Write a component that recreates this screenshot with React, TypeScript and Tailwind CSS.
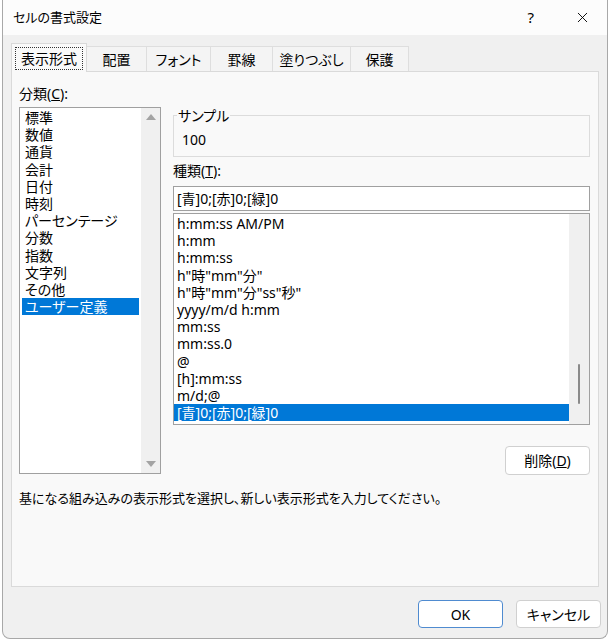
import { X } from 'lucide-react';

const categories = [
  '標準',
  '数値',
  '通貨',
  '会計',
  '日付',
  '時刻',
  'パーセンテージ',
  '分数',
  '指数',
  '文字列',
  'その他',
  'ユーザー定義',
];

const formats = [
  'h:mm:ss AM/PM',
  'h:mm',
  'h:mm:ss',
  'h"時"mm"分"',
  'h"時"mm"分"ss"秒"',
  'yyyy/m/d h:mm',
  'mm:ss',
  'mm:ss.0',
  '@',
  '[h]:mm:ss',
  'm/d;@',
  '[青]0;[赤]0;[緑]0',
];

const tabs = [
  { label: '配置', w: 'w-[60px]' },
  { label: 'フォント', w: 'w-[64px]' },
  { label: '罫線', w: 'w-[62px]' },
  { label: '塗りつぶし', w: 'w-[78px]' },
  { label: '保護', w: 'w-[58px]' },
];

export default function App() {
  return (
    <div className="w-[610px] h-[641px] bg-white font-['Noto_Sans','Noto_Sans_CJK_JP',sans-serif] [font-feature-settings:'palt'] text-[14px] text-black">
      <div className="ml-[2px] w-[606px] h-[639px] border-x border-b border-[#a8a8a8] rounded-b-[8px] bg-[#f0f0f0] flex flex-col overflow-hidden">
        {/* title bar */}
        <div className="h-[35px] bg-[#fcfcfc] flex items-center pl-[10px]">
          <span className="text-[13px]">セルの書式設定</span>
          <span className="ml-auto mr-[40px] text-[15px]">?</span>
          <X className="w-[17px] h-[17px] mr-[16px]" strokeWidth={1.3} />
        </div>

        {/* tabs */}
        <div className="flex items-end pl-[8px] mt-[8px] h-[28px] relative z-10">
          <div className="w-[76px] h-[29px] -mb-px px-[3px] pt-[3px] pb-[2px] bg-[#f9f9f9] border-x border-t border-[#d9d9d9] flex">
            <div className="flex-1 border border-dotted border-[#333] flex items-center justify-center leading-[20px]">
              表示形式
            </div>
          </div>
          {tabs.map((t) => (
            <div
              key={t.label}
              className={`${t.w} h-[25px] flex items-center justify-center bg-[#f4f4f4] border-t border-r border-[#dedede]`}
            >
              {t.label}
            </div>
          ))}
        </div>

        {/* panel */}
        <div className="mx-[8px] h-[516px] bg-[#f9f9f9] border border-[#dadada] flex flex-col pl-[7px] pr-[8px] pt-[13px]">
          <div className="flex gap-[12px]">
            {/* left column */}
            <div className="w-[142px] flex flex-col">
              <div className="leading-[17px] h-[22px]">
                分類(<u>C</u>):
              </div>
              <div className="h-[367px] border border-[#a0a0a0] bg-white flex">
                <div className="flex-1 pt-[1px] pl-[2px] pr-[2px]">
                  {categories.map((c) => (
                    <div
                      key={c}
                      className={`leading-[17.2px] pl-[3px] whitespace-nowrap ${
                        c === 'ユーザー定義' ? 'bg-[#0078d7] text-white' : ''
                      }`}
                    >
                      {c}
                    </div>
                  ))}
                </div>
                <div className="w-[19px] bg-[#f0f0f0] flex flex-col items-center justify-between py-[6px]">
                  <svg width="10" height="6" viewBox="0 0 10 6">
                    <path d="M5 0 L10 6 L0 6 Z" fill="#a3a3a3" />
                  </svg>
                  <svg width="10" height="6" viewBox="0 0 10 6">
                    <path d="M0 0 L10 0 L5 6 Z" fill="#a3a3a3" />
                  </svg>
                </div>
              </div>
            </div>

            {/* right column */}
            <div className="flex-1 flex flex-col">
              <fieldset className="mt-[22px] h-[50px] border border-[#dcdcdc] px-[8px]">
                <legend className="px-[1px] -ml-[5px] leading-[17px]">サンプル</legend>
                <div className="pt-[7px] leading-[17px]">100</div>
              </fieldset>
              <div className="mt-[5px] leading-[17px] h-[24px]">
                種類(<u>T</u>):
              </div>
              <div className="h-[25px] border border-[#a0a0a0] bg-white flex items-center pl-[3px]">
                [青]0;[赤]0;[緑]0
              </div>
              <div className="mt-[2px] h-[212px] border border-[#a0a0a0] bg-white flex">
                <div className="flex-1 pt-[1px]">
                  {formats.map((f, i) => (
                    <div
                      key={f}
                      className={`leading-[17.2px] pl-[3px] ${
                        i === formats.length - 1 ? 'bg-[#0078d7] text-white' : ''
                      }`}
                    >
                      {f}
                    </div>
                  ))}
                </div>
                <div className="w-[20px] bg-[#f0f0f0] flex flex-col items-center justify-end pb-[20px]">
                  <div className="w-[2px] h-[40px] rounded-full bg-[#8a8a8a]" />
                </div>
              </div>
              <div className="flex justify-end mt-[21px]">
                <button className="w-[85px] h-[29px] rounded-[4px] border border-[#d0d0d0] bg-white">
                  削除(<u>D</u>)
                </button>
              </div>
            </div>
          </div>
          <div className="mt-[15px] text-[13px] leading-[17px]">
            基になる組み込みの表示形式を選択し、新しい表示形式を入力してください。
          </div>
        </div>

        {/* buttons */}
        <div className="flex justify-end gap-[13px] pr-[6px] mt-[13px]">
          <button className="w-[85px] h-[28px] rounded-[4px] border border-[#4f8bd0] bg-white">
            OK
          </button>
          <button className="w-[85px] h-[28px] rounded-[4px] border border-[#d0d0d0] bg-white">
            キャンセル
          </button>
        </div>
      </div>
    </div>
  );
}
